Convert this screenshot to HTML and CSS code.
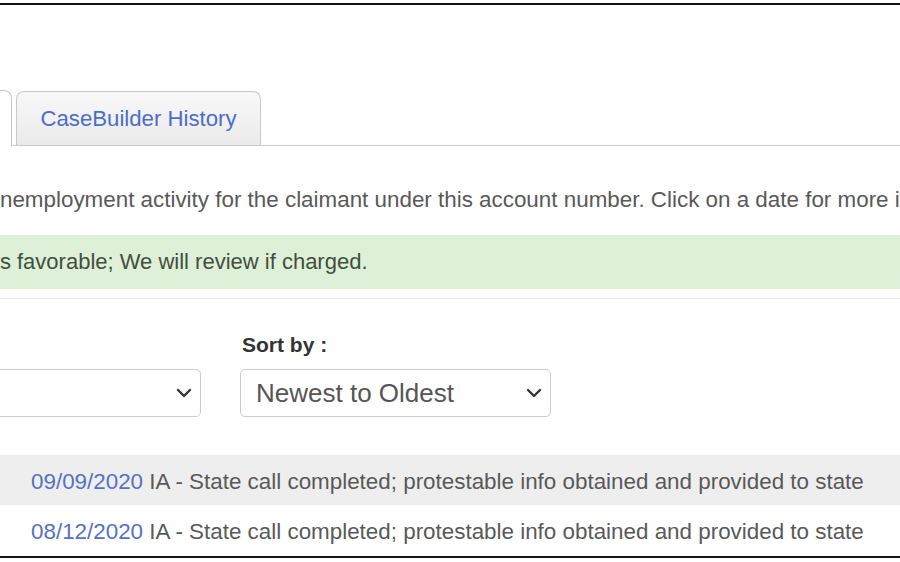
FILE: index.html
```html
<!DOCTYPE html>
<html lang="en">
<head>
<meta charset="utf-8">
<title>Activity</title>
<link rel="stylesheet" href="styles.css">
</head>
<body>
<div class="frame">
  <div class="page">
    <div class="tabs">
      <div class="tab tab-active"><span>Activity</span></div>
      <div class="tab tab-inactive"><a href="#">CaseBuilder History</a></div>
    </div>

    <p class="desc"><span class="desc-text">unemployment activity for the claimant under this account number. Click on a date for more information.</span></p>

    <div class="alert"><span class="alert-text">is favorable; We will review if charged.</span></div>

    <div class="sep"></div>

    <div class="filters">
      <div class="field field-first">
        <div class="select select-first">
          <span class="select-value">All</span>
          <svg class="chev" width="16" height="10" viewBox="0 0 16 10"><path d="M2 2 L8 8 L14 2" fill="none" stroke="#333" stroke-width="2.4" stroke-linecap="round" stroke-linejoin="round"/></svg>
        </div>
      </div>
      <div class="field">
        <div class="label">Sort by :</div>
        <div class="select select-sort">
          <span class="select-value">Newest to Oldest</span>
          <svg class="chev" width="16" height="10" viewBox="0 0 16 10"><path d="M2 2 L8 8 L14 2" fill="none" stroke="#333" stroke-width="2.4" stroke-linecap="round" stroke-linejoin="round"/></svg>
        </div>
      </div>
    </div>

    <ul class="activity">
      <li class="row row-alt"><a href="#">09/09/2020</a> IA - State call completed; protestable info obtained and provided to state</li>
      <li class="row"><a href="#">08/12/2020</a> IA - State call completed; protestable info obtained and provided to state</li>
    </ul>
  </div>
</div>
</body>
</html>
```

FILE: styles.css
```css
html, body {
  margin: 0;
  padding: 0;
  background: #ffffff;
}

body {
  font-family: "Liberation Sans", Arial, sans-serif;
  color: #555555;
  width: 900px;
  height: 562px;
  overflow: hidden;
}

.frame {
  margin-top: 3px;
  width: 900px;
  height: 551px;
  border-top: 2px solid #151515;
  border-bottom: 2px solid #151515;
  overflow: hidden;
  background: #ffffff;
}

.page {
  padding-top: 85px;
}

/* Tabs */
.tabs {
  display: flex;
  align-items: flex-end;
  height: 55px;
  border-bottom: 1px solid #cccccc;
  margin-left: 12px;
}

.tab {
  box-sizing: border-box;
  display: flex;
  align-items: center;
  justify-content: center;
  font-size: 22.2px;
  border: 1px solid #c9c9c9;
  border-bottom: none;
  border-radius: 8px 8px 0 0;
}

.tab-active {
  width: 200px;
  margin-left: -200px;
  height: 56px;
  margin-bottom: -1px;
  background: #ffffff;
  color: #555555;
}

.tab-active span {
  visibility: hidden;
}

.tab-inactive {
  width: 245px;
  height: 54px;
  margin-left: 4px;
  padding-top: 1px;
  background: linear-gradient(#f8f8f8, #eaeaea);
}

.tab-inactive a {
  color: #4d6dc9;
  text-decoration: none;
}

/* Description */
.desc {
  margin: 42px 0 0 0;
  font-size: 22.4px;
  line-height: 24px;
  white-space: nowrap;
  color: #595959;
}

.desc-text {
  margin-left: -12.5px;
}

/* Alert */
.alert {
  margin-top: 23px;
  height: 54px;
  background: #dff0d8;
  color: #414f40;
  font-size: 22px;
  display: flex;
  align-items: center;
  white-space: nowrap;
}

.alert-text {
  margin-left: -5px;
}

.sep {
  margin-top: 9px;
  height: 1px;
  background: #e6e6e6;
}

/* Filters */
.filters {
  display: flex;
  gap: 39px;
  margin-top: 34px;
  align-items: flex-end;
}

.field {
  display: flex;
  flex-direction: column;
}

.field-first {
  margin-left: -110px;
}

.label {
  font-size: 21px;
  font-weight: bold;
  color: #333333;
  line-height: 24px;
  margin-bottom: 12px;
  padding-left: 2px;
}

.select {
  box-sizing: border-box;
  width: 311px;
  height: 48px;
  border: 1px solid #cccccc;
  border-radius: 5px;
  background: #ffffff;
  display: flex;
  align-items: center;
  justify-content: space-between;
  padding: 0 8px 0 15px;
  font-size: 26px;
  color: #555555;
}

.select-first .select-value {
  visibility: hidden;
}

.chev {
  display: block;
}

/* Activity list */
.activity {
  list-style: none;
  margin: 38px 0 0 0;
  padding: 0;
}

.row {
  height: 50px;
  display: flex;
  align-items: center;
  padding-left: 31px;
  padding-top: 3px;
  box-sizing: border-box;
  font-size: 22.4px;
  white-space: pre;
  color: #595959;
}

.row + .row {
  height: 51px;
}

.row-alt {
  background: #eeeeee;
}

.row a {
  color: #5571c7;
  text-decoration: none;
}
```
